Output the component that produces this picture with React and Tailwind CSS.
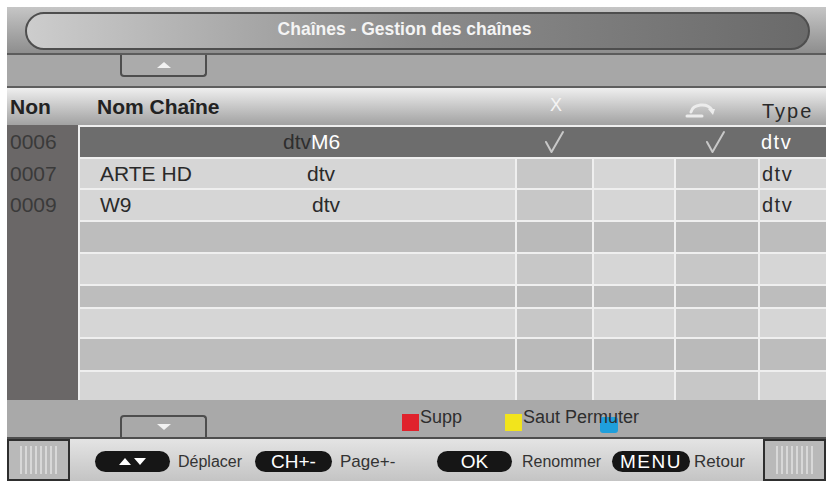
import React from 'react'

const FONT = { fontFamily: '"Liberation Sans", Arial, sans-serif' }

const ROWS = [
  { h: 'h-[30px]', num: '0006', selected: true },
  { h: 'h-[29px]', num: '0007', name: 'ARTE HD', dtvAt: 'w-[207px]' },
  { h: 'h-[30px]', num: '0009', name: 'W9', dtvAt: 'w-[212px]' },
  { h: 'h-[30px]', dark: true },
  { h: 'h-[30px]' },
  { h: 'h-[21px]', dark: true },
  { h: 'h-[28px]' },
  { h: 'h-[31px]', dark: true },
  { h: 'h-[28px]' },
]

function Check() {
  return (
    <svg width="22" height="24" viewBox="0 0 22 24" fill="none">
      <path d="M3 12 L8.5 22 L20 2" stroke="#c8c8c8" strokeWidth="2" strokeLinecap="round" strokeLinejoin="round" />
    </svg>
  )
}

function SkipIcon() {
  return (
    <svg width="34" height="18" viewBox="0 0 34 18" fill="none">
      <path d="M6 11 C8 3 22 1 27 9" stroke="#ececec" strokeWidth="3" strokeLinecap="round" />
      <path d="M23 8 L30 8 L28 14 Z" fill="#ececec" />
      <path d="M2 15 H17" stroke="#ececec" strokeWidth="3" strokeLinecap="round" />
    </svg>
  )
}

function Row({ row }) {
  if (row.selected) {
    return (
      <div className={`${row.h} flex items-center bg-[#6d6d6d]`}>
        <div className="w-[437px] pl-[203px] text-[21px] text-[#2e2e2e]">
          dtv<span className="text-white">M6</span>
        </div>
        <div className="w-[78px] flex justify-center pr-[4px]"><Check /></div>
        <div className="w-[80px]" />
        <div className="w-[84px] flex justify-center pr-[4px]"><Check /></div>
        <div className="flex-1 pl-[2px] text-[20px] tracking-[1.5px] text-white">dtv</div>
      </div>
    )
  }
  const base = row.dark ? 'bg-[#bdbdbd]' : 'bg-[#d6d6d6]'
  const alt = row.dark ? 'bg-[#bababa]' : 'bg-[#c7c7c7]'
  return (
    <div className={`${row.h} flex gap-[2px]`}>
      <div className={`w-[435px] ${base} flex items-center pl-[20px] text-[21px] text-[#2a2a2a]`}>
        {row.name && (
          <>
            <span className={row.dtvAt}>{row.name}</span>
            <span>dtv</span>
          </>
        )}
      </div>
      <div className={`w-[75px] ${alt}`} />
      <div className={`w-[80px] ${base}`} />
      <div className={`w-[82px] ${alt}`} />
      <div className={`flex-1 ${base} flex items-center pl-[2px] text-[20px] tracking-[1.5px] text-[#2a2a2a]`}>
        {row.name ? 'dtv' : ''}
      </div>
    </div>
  )
}

function Pill({ children, w }) {
  return (
    <div className={`${w} h-[21px] rounded-full bg-[#161616] text-white flex items-center justify-center text-[19px] leading-none`}>
      {children}
    </div>
  )
}

function StripeBox() {
  return (
    <div className="w-[63px] h-full border-2 border-[#2e2e2e] bg-[#b9b9b9] flex items-center justify-center gap-[3px] px-[4px]">
      {Array.from({ length: 8 }).map((_, i) => (
        <div key={i} className="w-[2px] h-[28px] bg-[#d8d8d8]" />
      ))}
    </div>
  )
}

export default function App() {
  return (
    <div className="w-[829px] h-[484px] bg-white pt-[7px] pl-[7px]" style={FONT}>
      <div className="w-[819px] h-[475px] flex flex-col overflow-hidden">
        {/* title */}
        <div className="h-[48px] bg-linear-to-b from-[#c6c6c6] to-[#8e8e8e] pt-[5px] pl-[18px] pr-[16px] border-b-2 border-[#5c5c5c]">
          <div className="h-[38px] rounded-full border-2 border-[#4e4e4e] bg-linear-to-r from-[#cdcdcd] via-[#8c8c8c] to-[#6a6a6a] flex justify-center pt-[4px] pr-[26px]">
            <span className="text-[17.5px] leading-[22px] font-bold text-[#f4f4f4]">Chaînes - Gestion des chaînes</span>
          </div>
        </div>

        {/* up tab */}
        <div className="h-[33px] bg-[#a7a7a7] pl-[113px] border-b-2 border-[#5e5e5e]">
          <div className="w-[87px] h-[22px] border-2 border-t-0 border-[#4e4e4e] rounded-b-[4px] bg-[#ababab] flex items-center justify-center">
            <div className="w-0 h-0 border-l-[7px] border-r-[7px] border-b-[6px] border-l-transparent border-r-transparent border-b-[#f2f2f2]" />
          </div>
        </div>

        {/* header */}
        <div className="h-[37px] bg-linear-to-b from-[#efefef] to-[#a2a2a2] flex items-center text-[21px]">
          <span className="w-[90px] pl-[3px] font-bold text-[#222]">Non</span>
          <span className="w-[453px] font-bold text-[#222]">Nom Chaîne</span>
          <span className="w-[135px] text-[18px] text-[#f4f4f4] pb-[2px]">X</span>
          <span className="w-[77px] pt-[6px]"><SkipIcon /></span>
          <span className="text-[20px] text-[#2a2a2a] tracking-[2px] pt-[8px]">Type</span>
        </div>

        {/* body */}
        <div className="h-[275px] flex bg-[#efefef]">
          <div className="w-[71px] bg-[#6a6767] pt-[2px] flex flex-col gap-[2px]">
            {ROWS.map((r, i) => (
              <div key={i} className={`${r.h} flex items-center pl-[3px] text-[21px] text-[#3a3a3a]`}>
                {r.num || ''}
              </div>
            ))}
          </div>
          <div className="flex-1 pl-[2px] pt-[2px] flex flex-col gap-[2px]">
            {ROWS.map((r, i) => (
              <Row key={i} row={r} />
            ))}
          </div>
        </div>

        {/* down tab + colour keys */}
        <div className="h-[39px] bg-[#a9a9a9] flex items-end border-b-2 border-[#4e4e4e]">
          <div className="ml-[113px] w-[87px] h-[22px] border-2 border-b-0 border-[#4e4e4e] rounded-t-[4px] flex items-center justify-center">
            <div className="w-0 h-0 border-l-[7px] border-r-[7px] border-t-[6px] border-l-transparent border-r-transparent border-t-[#f2f2f2]" />
          </div>
          <div className="self-start mt-[14px] ml-[195px] flex items-start text-[18px] leading-none text-[#2e2e2e]">
            <div className="w-[17px] h-[17px] bg-[#e0222c]" />
            <span className="-mt-[6px] ml-[1px]">Supp</span>
            <div className="w-[17px] h-[17px] bg-[#f2e41c] ml-[43px]" />
            <div className="relative">
              <div className="absolute left-[78px] top-[3px] w-[18px] h-[16px] bg-[#1f9fdc] rounded-[3px]" />
              <span className="relative -mt-[6px] ml-[1px] block">Saut Permuter</span>
            </div>
          </div>
        </div>

        {/* button bar */}
        <div className="h-[42px] bg-linear-to-b from-[#e4e4e4] to-[#c4c4c4] flex items-center text-[17px] text-[#333]">
          <StripeBox />
          <div className="ml-[25px] mt-[3px]">
            <Pill w="w-[75px]">
              <div className="flex gap-[3px] items-center">
                <div className="w-0 h-0 border-l-[6px] border-r-[6px] border-b-[7px] border-l-transparent border-r-transparent border-b-white" />
                <div className="w-0 h-0 border-l-[6px] border-r-[6px] border-t-[7px] border-l-transparent border-r-transparent border-t-white" />
              </div>
            </Pill>
          </div>
          <span className="ml-[8px] w-[77px] text-[16px] mt-[3px]">Déplacer</span>
          <div className="mt-[3px]"><Pill w="w-[77px]">CH+-</Pill></div>
          <span className="ml-[8px] w-[97px] mt-[3px]">Page+-</span>
          <div className="mt-[3px]"><Pill w="w-[75px]">OK</Pill></div>
          <span className="ml-[10px] w-[90px] text-[16px] mt-[3px]">Renommer</span>
          <div className="mt-[3px]">
            <Pill w="w-[78px]">
              <span className="tracking-[1.5px]">MENU</span>
            </Pill>
          </div>
          <span className="ml-[4px] w-[69px] mt-[3px]">Retour</span>
          <StripeBox />
        </div>
      </div>
    </div>
  )
}
